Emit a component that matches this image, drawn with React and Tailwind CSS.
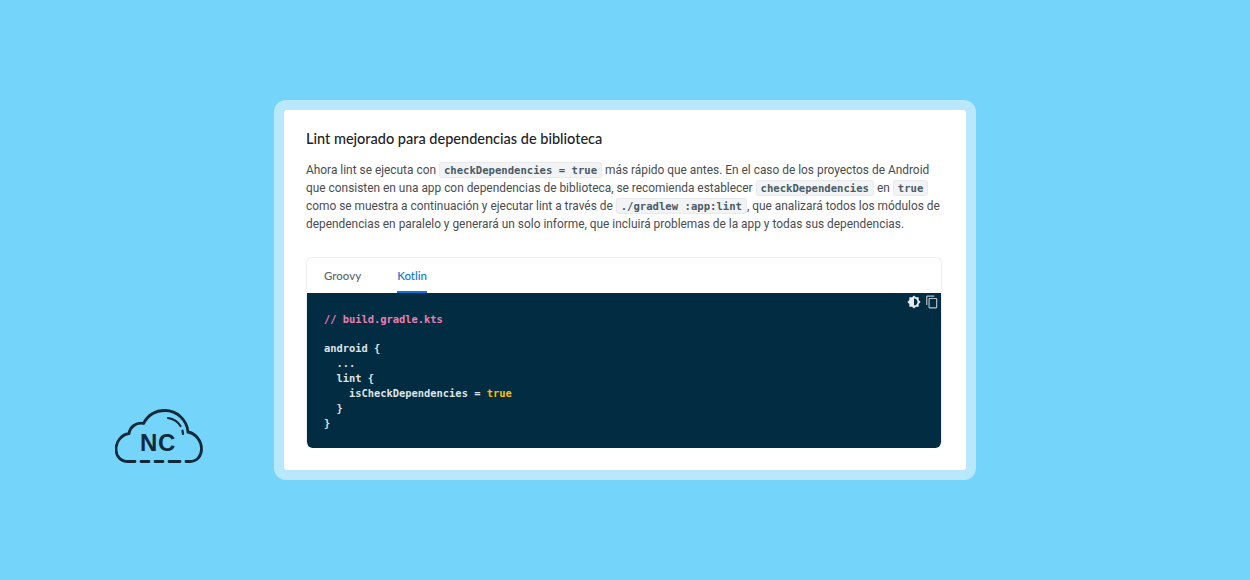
import React from "react";

const Code = ({ children }) => (
  <code className="font-['DejaVu_Sans_Mono',monospace] font-bold text-[10.6px] leading-none text-[#4a5c66] bg-[#f1f3f4] border border-[#e8eaed] rounded-[3px] px-[4px] py-[1px]">
    {children}
  </code>
);

function Logo() {
  return (
    <div className="relative w-[88px] h-[55px]">
      <svg viewBox="115 409 88 55" className="w-[88px] h-[55px]" fill="none" stroke="#12293a" strokeWidth="2.8" strokeLinecap="round">
        <path d="M135 461.5H128C120.5 461.5 116 456 116 449.5C116 441 122 434.5 129 433.5C130 427 136 422 143.5 423.5C148 415 156 410.5 165 410.5C177 410.5 187 420 188 432C196 433.5 201.5 441 201.5 449C201.5 456 197 461.5 190 461.5H186" />
        <path d="M141 461.5H149M155 461.5H163M169 461.5H180" />
        <path d="M168 418C174 419 178 422 180.5 426M182.5 430.5L183 434" strokeWidth="2.2" />
      </svg>
      <span className="absolute left-[25px] top-[21px] font-['Liberation_Sans',sans-serif] font-bold text-[24px] leading-[26px] tracking-[0.6px] text-[#12293a]">NC</span>
    </div>
  );
}

export default function App() {
  return (
    <div className="w-[1250px] h-[580px] bg-[#74d4f9] flex items-start pl-[115px] font-['Roboto',sans-serif] overflow-hidden">
      <div className="mt-[409px] mr-[71px] shrink-0">
        <Logo />
      </div>

      <div className="mt-[100px] w-[702px] h-[380px] border-[10px] border-[#b9e8fc] rounded-[12px] bg-white bg-clip-padding px-[22px] pt-[20px]">
        <h2 className="font-['Lato',sans-serif] font-medium text-[14.5px] leading-[18px] text-[#202124]">
          Lint mejorado para dependencias de biblioteca
        </h2>

        <p className="mt-[13px] w-[640px] text-[11.9px] leading-[18px] text-[#4a4d50]">
          Ahora lint se ejecuta con <Code>checkDependencies = true</Code> más rápido que antes. En el caso de los proyectos de Android
          <br />
          que consisten en una app con dependencias de biblioteca, se recomienda establecer <Code>checkDependencies</Code> en <Code>true</Code>
          <br />
          como se muestra a continuación y ejecutar lint a través de <Code>./gradlew :app:lint</Code>, que analizará todos los módulos de
          <br />
          dependencias en paralelo y generará un solo informe, que incluirá problemas de la app y todas sus dependencias.
        </p>

        <div className="mt-[24px] w-[636px] h-[191px] rounded-[6px] border border-[#eceef0] border-b-0 flex flex-col overflow-hidden">
          <div className="h-[35px] shrink-0 flex pl-[17px] gap-[36px] text-[11.5px] font-['Lato',sans-serif] font-medium">
            <span className="leading-[35px] text-[#5f6368]">Groovy</span>
            <span className="h-[35px] leading-[35px] text-[#0b76d8] border-b-2 border-[#0b76d8]">Kotlin</span>
          </div>

          <div className="relative flex-1 bg-[#012c42] rounded-b-[5px] pl-[17px] pt-[18px] font-['DejaVu_Sans_Mono',monospace] font-bold text-[10.4px] leading-[15px] text-[#dfe3e6] whitespace-pre">
            <div className="absolute right-[2px] top-[2px] flex items-center gap-[4px]">
              <svg width="14" height="14" viewBox="0 0 24 24" fill="#e8eaed">
                <path d="M20 8.69V4h-4.69L12 .69 8.69 4H4v4.69L.69 12 4 15.31V20h4.69L12 23.31 15.31 20H20v-4.69L23.31 12 20 8.69zM12 18V6c3.31 0 6 2.69 6 6s-2.69 6-6 6z" />
              </svg>
              <svg width="14" height="14" viewBox="0 0 24 24" fill="#b8c4cb">
                <path d="M16 1H4c-1.1 0-2 .9-2 2v14h2V3h12V1zm3 4H8c-1.1 0-2 .9-2 2v14c0 1.1.9 2 2 2h11c1.1 0 2-.9 2-2V7c0-1.1-.9-2-2-2zm0 16H8V7h11v14z" />
              </svg>
            </div>
            <div className="text-[#e97fb0] pt-[1px] -mb-[1px]">// build.gradle.kts</div>
            <div>{" "}</div>
            <div>android {"{"}</div>
            <div>{"  ..."}</div>
            <div>{"  lint {"}</div>
            <div>
              {"    isCheckDependencies = "}
              <span className="text-[#fbbc04]">true</span>
            </div>
            <div>{"  }"}</div>
            <div>{"}"}</div>
          </div>
        </div>
      </div>
    </div>
  );
}
